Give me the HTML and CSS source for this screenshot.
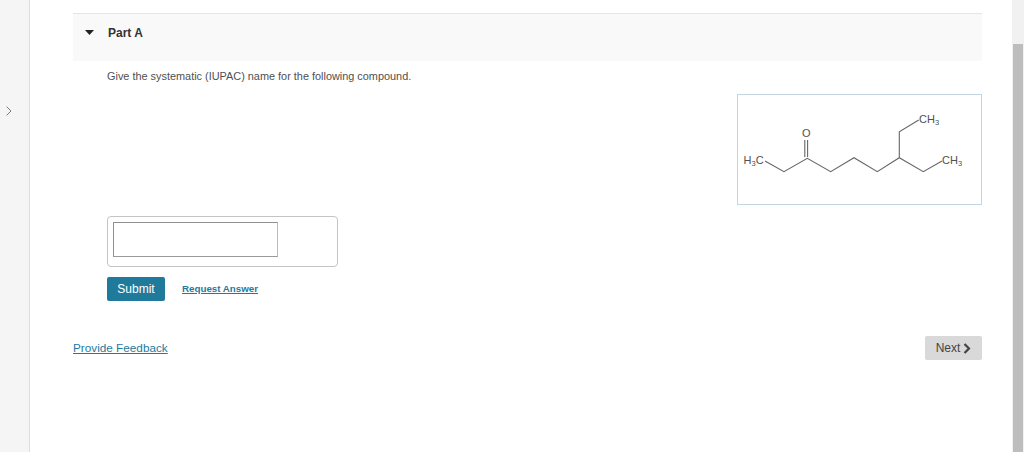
FILE: index.html
```html
<!DOCTYPE html>
<html lang="en">
<head>
<meta charset="utf-8">
<title>Part A</title>
<link rel="stylesheet" href="styles.css">
</head>
<body>
<div class="page">
  <aside class="rail">
    <svg class="rail-arrow" width="6" height="10" viewBox="0 0 6 10"><path d="M.7.7L5 5 .7 9.3" fill="none" stroke="#777" stroke-width="1"/></svg>
  </aside>
  <main class="main">
    <section class="part">
      <header class="part-head">
        <svg class="caret" width="9" height="5" viewBox="0 0 9 5"><path d="M0 0h9L4.5 5z" fill="#222"/></svg>
        <h2 class="part-title">Part A</h2>
      </header>
      <div class="part-body">
        <p class="prompt">Give the systematic (IUPAC) name for the following compound.</p>
        <div class="figure-row">
          <div class="figure">
            <svg width="243" height="109" viewBox="738 95 243 109">
              <g fill="none" stroke="#666" stroke-width="1.1">
                <path d="M765 161L784 171.7L807.3 158.3L830.7 171.7L854 157.7L877.3 171.7L899.3 157.7L923.3 171.7L942 161"/>
                <path d="M899.3 157.7V131.7L918.7 120"/>
                <path d="M804.8 157V140M807.6 157V140"/>
              </g>
              <g class="chem">
                <text x="743.5" y="164">H<tspan class="sub" dy="2">3</tspan><tspan dy="-2">C</tspan></text>
                <text x="802" y="137">O</text>
                <text x="919" y="123">CH<tspan class="sub" dy="2">3</tspan></text>
                <text x="942" y="164">CH<tspan class="sub" dy="2">3</tspan></text>
              </g>
            </svg>
          </div>
        </div>
        <div class="answer-box">
          <input class="answer" type="text" aria-label="Answer">
        </div>
        <div class="actions">
          <button class="submit" type="button">Submit</button>
          <a class="request" href="#">Request Answer</a>
        </div>
      </div>
    </section>
    <footer class="foot">
      <a class="feedback" href="#">Provide Feedback</a>
      <button class="next" type="button">Next <svg width="8" height="11" viewBox="0 0 8 11"><path d="M1.5 1l4.5 4.5-4.5 4.5" fill="none" stroke="#444" stroke-width="2.2"/></svg></button>
    </footer>
  </main>
  <div class="scrollbar"><div class="thumb"></div></div>
</div>
</body>
</html>
```
FILE: styles.css
```css
* { box-sizing: border-box; }
html, body { margin: 0; height: 100%; overflow: hidden; background: #fff; }
body { font-family: "Liberation Sans", Arial, sans-serif; color: #333; }
.page { display: flex; height: 452px; width: 1024px; }
.rail { width: 30px; flex: none; background: #f5f5f5; border-right: 1px solid #ddd; padding: 106px 0 0 6px; }
.rail-arrow { display: block; }
.main { flex: 1; min-width: 0; padding: 13px 30px 0 43px; }
.part-head { height: 48px; display: flex; align-items: center; gap: 14px; padding: 0 0 10px 12px; background: #f9f9f9; border-top: 1px solid #e5e5e5; }
.caret { display: block; flex: none; }
.part-title { margin: 0; font-size: 12px; font-weight: bold; color: #333; }
.part-body { padding: 8px 0 0 34px; }
.prompt { margin: 0; font-size: 10.9px; line-height: 14px; color: #505050; }
.figure-row { display: flex; justify-content: flex-end; margin-top: 11px; }
.figure { width: 245px; height: 111px; border: 1px solid #c5d5e0; background: #fff; }
.figure svg { display: block; }
.chem { font-family: "Liberation Sans", Arial, sans-serif; font-size: 11px; fill: #505050; }
.sub { font-size: 7.5px; }
.answer-box { width: 231px; height: 51px; margin-top: 11px; padding: 5px; border: 1px solid #c4c4c4; border-radius: 4px; }
.answer { display: block; width: 165px; height: 35px; border: 1px solid #8f8f8f; border-right-color: #bbb; border-bottom-color: #999; background: #fff; padding: 0; }
.actions { display: flex; align-items: center; gap: 17px; margin-top: 10px; }
.submit { width: 58px; height: 24px; padding: 0; border: 0; border-radius: 2px; background: #1f7a9c; color: #fff; font: 12px "Liberation Sans", Arial, sans-serif; }
.request { font-size: 9.75px; font-weight: bold; color: #1f7a9c; margin-bottom: 2px; }
.foot { display: flex; justify-content: space-between; align-items: center; margin-top: 35px; }
.feedback { font-size: 11.75px; color: #1f7a9c; margin-bottom: 2px; }
.next { display: flex; align-items: center; justify-content: center; gap: 3px; width: 57px; height: 24px; padding: 0; border: 0; border-radius: 2px; background: #d9d9d9; color: #444; font: 12px "Liberation Sans", Arial, sans-serif; }
.scrollbar { width: 12px; flex: none; background: #f1f1f1; padding: 44px 1px 0; }
.thumb { height: 100%; background: #bdbdbd; }
```
